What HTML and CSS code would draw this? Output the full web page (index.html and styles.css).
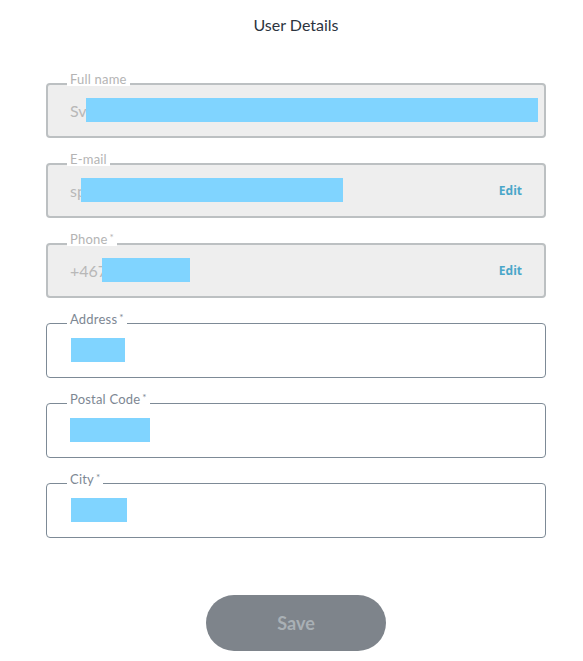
FILE: index.html
```html
<!DOCTYPE html>
<html lang="en">
<head>
    <meta charset="UTF-8">
    <meta name="viewport" content="width=device-width, initial-scale=1.0">
    <title>User Details</title>
    <link rel="stylesheet" href="styles.css">
</head>
<body>

<div class="page">
    <h1 class="title">User Details</h1>

    <form class="details-form">
        <div class="field disabled">
            <label>Full name</label>
            <div class="value"><span>Sv</span><span class="mask mask-name"></span></div>
        </div>

        <div class="field disabled">
            <label>E-mail</label>
            <div class="value"><span>sp</span><span class="mask mask-email"></span></div>
            <a class="edit" href="#">Edit</a>
        </div>

        <div class="field disabled">
            <label>Phone<sup>*</sup></label>
            <div class="value"><span>+467</span><span class="mask mask-phone"></span></div>
            <a class="edit" href="#">Edit</a>
        </div>

        <div class="field">
            <label>Address<sup>*</sup></label>
            <div class="value"><span class="mask mask-address"></span></div>
        </div>

        <div class="field">
            <label>Postal Code<sup>*</sup></label>
            <div class="value"><span class="mask mask-postal"></span></div>
        </div>

        <div class="field">
            <label>City<sup>*</sup></label>
            <div class="value"><span class="mask mask-city"></span></div>
        </div>

        <div class="actions">
            <button type="button" class="save" disabled>Save</button>
        </div>
    </form>
</div>

</body>
</html>
```

FILE: styles.css
```css
html, body {
    margin: 0;
    padding: 0;
    background: #fff;
    font-family: Lato, "Open Sans", Arial, sans-serif;
}

.page {
    width: 500px;
    padding: 0 37px 0 46px;
}

.title {
    margin: 16px 0 0;
    font-size: 16px;
    font-weight: 400;
    color: #2c3440;
    text-align: center;
    line-height: 18px;
}

.details-form {
    display: flex;
    flex-direction: column;
    gap: 25px;
    margin-top: 49px;
}

.field {
    position: relative;
    box-sizing: border-box;
    height: 55px;
    padding: 0 23px 0 24px;
    border: 1px solid #7d8a96;
    border-radius: 4px;
    display: flex;
    align-items: center;
    justify-content: space-between;
}

/* label sits on top of the border, white behind it makes the notch */
.field label {
    position: absolute;
    top: -12px;
    left: 20px;
    padding: 0 3px;
    background: #fff;
    font-size: 13px;
    line-height: 14px;
    color: #7d8793;
    letter-spacing: 0.2px;
}

.field label sup {
    font-size: 10px;
    vertical-align: top;
    line-height: 10px;
    margin-left: 2px;
}

.field.disabled {
    background: #eeeeee;
    border: 2px solid #bcc0c2;
    padding-left: 22px;
    padding-right: 22px;
}

.field.disabled label {
    top: -13px;
    left: 19px;
    color: #b4b4b4;
}

.value {
    display: flex;
    align-items: center;
    font-size: 16px;
    color: #b8b8b8;
    margin-top: -1px;
}

.mask {
    display: inline-block;
    height: 24px;
    background: #80d4ff;
}

.mask-name { width: 452px; margin-left: -1px; }
.mask-email { width: 262px; margin-left: -5px; }
.mask-phone { width: 88px; margin-left: -5px; }
.mask-address { width: 54px; }
.mask-postal { width: 80px; margin-left: -1px; }
.mask-city { width: 56px; }

.edit {
    font-family: "Open Sans", Arial, sans-serif;
    font-size: 12px;
    font-weight: 700;
    color: #4aa6c9;
    text-decoration: none;
}

.actions {
    display: flex;
    justify-content: center;
    margin-top: 32px;
}

.save {
    width: 180px;
    height: 56px;
    border: none;
    border-radius: 28px;
    background: #7e848b;
    color: #a9b0b5;
    font-family: Lato, Arial, sans-serif;
    font-size: 18px;
    font-weight: 700;
}
```
